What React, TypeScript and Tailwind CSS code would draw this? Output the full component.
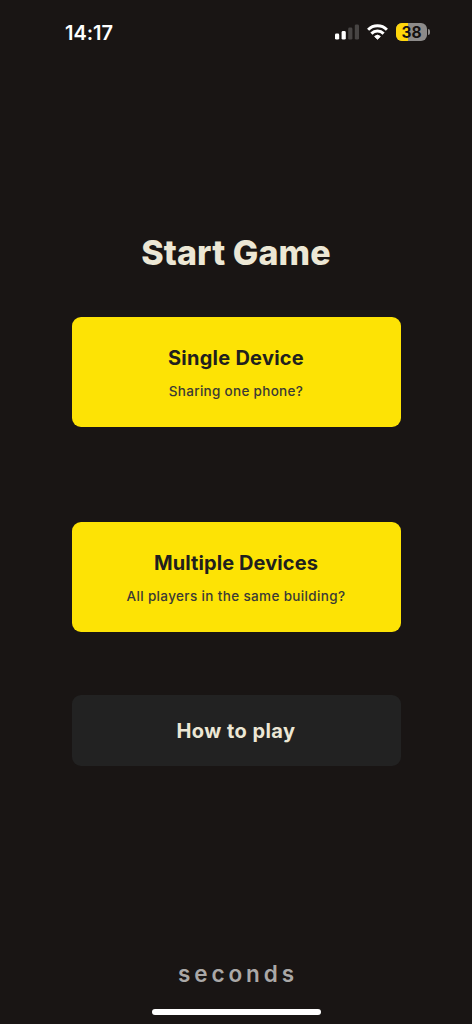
function SignalIcon() {
	return (
		<svg width="24" height="16" viewBox="0 0 24 16" aria-hidden>
			<rect x="0" y="9.6" width="4.2" height="6" rx="1.4" fill="#fff" />
			<rect x="6.6" y="7" width="4.2" height="8.6" rx="1.4" fill="#fff" />
			<rect x="13.2" y="3.6" width="4.2" height="12" rx="1.4" fill="#474443" />
			<rect x="19.8" y="0.4" width="4.2" height="15.2" rx="1.4" fill="#474443" />
		</svg>
	);
}

function WifiIcon() {
	return (
		<svg width="21" height="16" viewBox="0 0 21 16" aria-hidden>
			<g fill="none" stroke="#fff" strokeWidth="3">
				<path d="M1.1 5.7a13.4 13.4 0 0 1 18.8 0" />
				<path d="M4.4 9.6a8.6 8.6 0 0 1 12.2 0" />
			</g>
			<path
				d="M10.5 15.3 7.6 12.5a4.2 4.2 0 0 1 5.8 0Z"
				fill="#fff"
				stroke="#fff"
				strokeWidth="0.9"
				strokeLinejoin="round"
			/>
		</svg>
	);
}

function Battery({ level }: { level: number }) {
	return (
		<div className="flex items-center gap-px">
			<div className="relative flex h-[18px] w-[31px] items-center justify-center overflow-hidden rounded-[6px] bg-[#8d8b8a]">
				<div
					className="absolute inset-y-0 left-0 bg-[#ffd60a]"
					style={{ width: `${level}%` }}
				/>
				<span className="relative top-px text-[15.5px] leading-none font-bold text-[#141110]">
					{level}
				</span>
			</div>
			<div className="h-[6px] w-[2px] rounded-r-full bg-[#8d8b8a]" />
		</div>
	);
}

function StatusBar() {
	return (
		<header className="flex h-16 items-center justify-between pr-[42px] pl-[65px]">
			<time className="pt-px text-[20px] leading-none font-semibold tracking-[-0.05px] text-white">
				14:17
			</time>
			<div className="flex items-center gap-[8px]">
				<SignalIcon />
				<WifiIcon />
				<Battery level={38} />
			</div>
		</header>
	);
}

function ModeCard({
	title,
	subtitle,
	titleClass,
	subtitleClass,
}: {
	title: string;
	subtitle: string;
	titleClass: string;
	subtitleClass: string;
}) {
	return (
		<button
			type="button"
			className="flex h-[110px] w-full flex-col items-center rounded-[9px] bg-[#fde305] pt-[27px]"
		>
			<span
				className={`text-[20px] leading-[28px] font-bold whitespace-nowrap text-[#211f1e] ${titleClass}`}
			>
				{title}
			</span>
			<span
				className={`mt-[9px] text-[13.5px] leading-5 font-medium whitespace-nowrap text-[#3b3a35] ${subtitleClass}`}
			>
				{subtitle}
			</span>
		</button>
	);
}

export default function App() {
	return (
		<div className="flex h-screen w-full flex-col bg-[#191514] font-['Inter',sans-serif]">
			<StatusBar />

			<main className="flex flex-1 flex-col items-center px-[71.5px] pt-[168px]">
				<h1 className="text-[34px] leading-[42px] font-extrabold tracking-[0.1px] whitespace-nowrap text-[#ece7d5]">
					Start Game
				</h1>

				<div className="mt-[43px] flex w-full flex-col gap-[95px]">
					<ModeCard
						title="Single Device"
						subtitle="Sharing one phone?"
						titleClass="tracking-[0.25px]"
						subtitleClass="tracking-[0.3px]"
					/>
					<ModeCard
						title="Multiple Devices"
						subtitle="All players in the same building?"
						titleClass="tracking-[0.1px]"
						subtitleClass="tracking-[0.36px]"
					/>
				</div>

				<button
					type="button"
					className="mt-[63px] h-[71px] w-full rounded-[9px] bg-[#222222] text-[20px] font-bold tracking-[0.45px] text-[#ece7d5]"
				>
					How to play
				</button>
			</main>

			<footer className="flex flex-col items-center pb-[9px]">
				<p className="pl-[4px] text-[22.5px] leading-7 font-semibold tracking-[3.9px] text-[#aaa8a7]">
					seconds
				</p>
				<div className="mt-[21px] h-[6px] w-[169px] rounded-full bg-white" />
			</footer>
		</div>
	);
}
